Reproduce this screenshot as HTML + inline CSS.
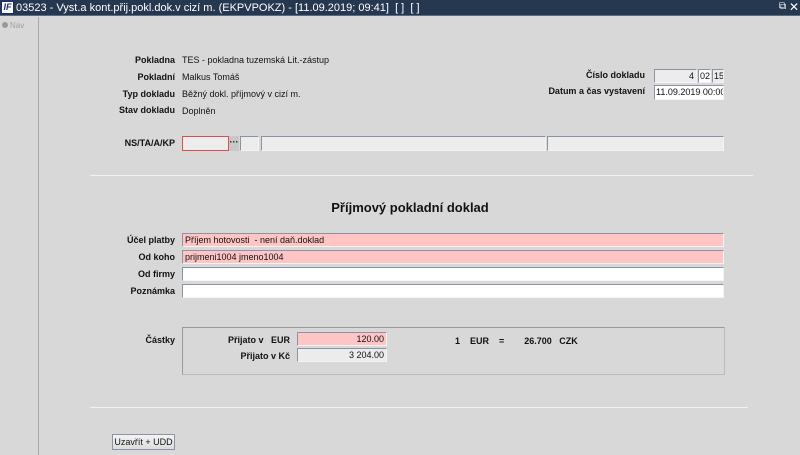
<!DOCTYPE html>
<html><head><meta charset="utf-8"><style>
*{margin:0;padding:0;box-sizing:border-box}
body{width:800px;height:455px;background:#d8d8d8;font-family:Tahoma,"Liberation Sans",sans-serif;font-size:9px;color:#111;position:relative;overflow:hidden}
.a{position:absolute;white-space:nowrap}
.lb{position:absolute;font-weight:bold;text-align:right;white-space:nowrap}
.f{position:absolute;border:1px solid #8a94a4;border-right-color:#f4f4f4;border-bottom-color:#f4f4f4;background:#ececec;padding:0 2px;line-height:12px;white-space:nowrap;overflow:hidden}
.w{background:#fff}.p{background:#ffc4c4}.r{text-align:right;padding-right:2px}
</style></head><body>
<div class="a" style="left:0;top:0;width:800px;height:16px;background:#263750;border-bottom:1px solid #5a6a80"></div>
<div class="a" style="left:1px;top:1px;width:13px;height:13px;background:#fff;border:1px solid #1a2a8a;color:#1a2a9a;font-weight:bold;font-style:italic;font-size:9px;line-height:11px;text-align:center">IF</div>
<div class="a" style="left:16px;top:1px;color:#fff;font-size:11px;line-height:14px;font-family:'Liberation Sans',sans-serif">03523 - Vyst.a kont.přij.pokl.dok.v cizí m. (EKPVPOKZ) - [11.09.2019; 09:41]&nbsp; [ ]&nbsp; [ ]</div>
<div class="a" style="left:779px;top:1px;color:#fff;font-size:10px">⧉</div>
<div class="a" style="left:789px;top:0;color:#fff;font-size:12px">✕</div>
<div class="a" style="left:38px;top:17px;width:1px;height:438px;background:#a8a8a8"></div>
<div class="a" style="left:2px;top:21px;color:#a0a0a0;font-size:8px"><span style="display:inline-block;width:6px;height:6px;border-radius:3px;background:#999;margin-right:2px"></span>Nav</div>

<div class="lb" style="right:625px;top:55px">Pokladna</div><div class="a" style="left:182px;top:55px">TES - pokladna tuzemská Lit.-zástup</div>
<div class="lb" style="right:625px;top:72px">Pokladní</div><div class="a" style="left:182px;top:72px">Malkus Tomáš</div>
<div class="lb" style="right:625px;top:89px">Typ dokladu</div><div class="a" style="left:182px;top:89px">Běžný dokl. příjmový v cizí m.</div>
<div class="lb" style="right:625px;top:105px">Stav dokladu</div><div class="a" style="left:182px;top:106px">Doplněn</div>

<div class="lb" style="right:155px;top:70px">Číslo dokladu</div>
<div class="f r" style="left:654px;top:69px;width:43px;height:14px">4</div>
<div class="f w" style="left:698px;top:69px;width:13px;height:14px;padding:0 1px">02</div>
<div class="f" style="left:712px;top:69px;width:12px;height:14px;padding:0 1px">15</div>
<div class="lb" style="right:155px;top:86px">Datum a čas vystavení</div>
<div class="f w" style="left:654px;top:85px;width:70px;height:15px;padding:0 1px;line-height:13px">11.09.2019 00:00</div>

<div class="lb" style="right:625px;top:138px">NS/TA/A/KP</div>
<div class="f" style="left:182px;top:136px;width:47px;height:15px;border:1px solid #e84848"></div>
<div class="a" style="left:229px;top:136px;width:10px;height:15px;background:#c8c8c8;font-weight:bold;text-align:center;line-height:12px">···</div>
<div class="f" style="left:240px;top:136px;width:19px;height:15px"></div>
<div class="f" style="left:261px;top:136px;width:285px;height:15px"></div>
<div class="f" style="left:547px;top:136px;width:177px;height:15px"></div>

<div class="a" style="left:90px;top:175px;width:663px;height:1px;background:#8c8c8c;border-bottom:1px solid #f2f2f2"></div>
<div class="a" style="left:0;width:820px;top:200px;text-align:center;font-weight:bold;font-size:13px;font-family:'Liberation Sans',sans-serif">Příjmový pokladní doklad</div>

<div class="lb" style="right:625px;top:235px">Účel platby</div><div class="f p" style="left:182px;top:233px;width:542px;height:14px">Příjem hotovosti&nbsp; - není daň.doklad</div>
<div class="lb" style="right:625px;top:252px">Od koho</div><div class="f p" style="left:182px;top:250px;width:542px;height:14px">prijmeni1004 jmeno1004</div>
<div class="lb" style="right:625px;top:269px">Od firmy</div><div class="f w" style="left:182px;top:267px;width:542px;height:14px"></div>
<div class="lb" style="right:625px;top:286px">Poznámka</div><div class="f w" style="left:182px;top:284px;width:542px;height:14px"></div>

<div class="lb" style="right:625px;top:335px">Částky</div>
<div class="a" style="left:182px;top:327px;width:543px;height:48px;border:1px solid #9a9a9a;border-right-color:#bbb;border-bottom-color:#bbb"></div>
<div class="lb" style="right:510px;top:335px">Přijato v&nbsp;&nbsp; EUR</div>
<div class="f p r" style="left:297px;top:332px;width:90px;height:14px">120.00</div>
<div class="lb" style="right:510px;top:351px">Přijato v Kč</div>
<div class="f r" style="left:297px;top:348px;width:90px;height:14px">3 204.00</div>
<div class="a" style="left:455px;top:336px;font-weight:bold">1&nbsp;&nbsp;&nbsp; EUR&nbsp;&nbsp;&nbsp; =&nbsp;&nbsp;&nbsp;&nbsp;&nbsp;&nbsp;&nbsp; 26.700&nbsp;&nbsp; CZK</div>

<div class="a" style="left:90px;top:407px;width:658px;height:1px;background:#8c8c8c;border-bottom:1px solid #f2f2f2"></div>
<div class="a" style="left:112px;top:434px;width:63px;height:16px;border:1px solid #8a94a4;background:linear-gradient(#f4f4f4,#dcdcdc);text-align:center;line-height:14px">Uzavřít + UDD</div>
</body></html>
